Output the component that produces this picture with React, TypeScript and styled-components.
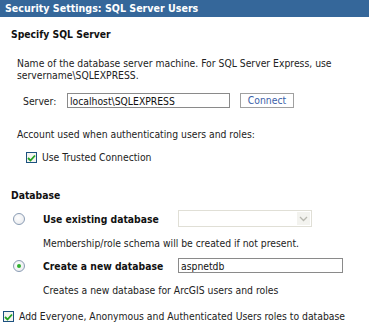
import React from 'react';
import styled, { createGlobalStyle } from 'styled-components';

const Global = createGlobalStyle`
  html, body { margin: 0; padding: 0; background: #fff; }
  body {
    font-family: "DejaVu Sans Condensed", "DejaVu Sans", Verdana, sans-serif;
    font-size: 10.3px;
    color: #222;
  }
`;

const App: React.FC = () => {
  return (
    <Wrapper>
      <Global />
      <Header>Security Settings: SQL Server Users</Header>
      <Section top={11}>
        <Title gap={16}>Specify SQL Server</Title>
        <Indent>
          <Text>
            Name of the database server machine. For SQL Server Express, use
            <br />
            servername\SQLEXPRESS.
          </Text>
          <ServerRow>
            <Label>Server:</Label>
            <TextBox width={163} defaultValue="localhost\SQLEXPRESS" />
            <Button>Connect</Button>
          </ServerRow>
          <Text>Account used when authenticating users and roles:</Text>
          <CheckRow indent={9} top={11}>
            <Check />
            <span>Use Trusted Connection</span>
          </CheckRow>
        </Indent>
      </Section>
      <Section top={25}>
        <Title gap={1}>Database</Title>
        <OptionRow>
          <Radio />
          <OptionLabel>Use existing database</OptionLabel>
          <Select>
            <SelectArrow>
              <svg width="9" height="6" viewBox="0 0 9 6">
                <path d="M1 1 L4.5 4.5 L8 1" fill="none" stroke="#b8b8b0" strokeWidth="1.3" />
              </svg>
            </SelectArrow>
          </Select>
        </OptionRow>
        <Note>Membership/role schema will be created if not present.</Note>
        <OptionRow>
          <Radio checked />
          <OptionLabel>Create a new database</OptionLabel>
          <TextBox width={165} defaultValue="aspnetdb" />
        </OptionRow>
        <Note>Creates a new database for ArcGIS users and roles</Note>
      </Section>
      <CheckRow indent={3} top={14}>
        <Check />
        <span>Add Everyone, Anonymous and Authenticated Users roles to database</span>
      </CheckRow>
    </Wrapper>
  );
};

const CheckMark: React.FC = () => (
  <svg width="9" height="8" viewBox="0 0 9 8">
    <path d="M1 4 L3.5 6.5 L8 1.5" fill="none" stroke="#21a121" strokeWidth="1.8" />
  </svg>
);

const Check: React.FC = () => (
  <CheckBox>
    <CheckMark />
  </CheckBox>
);

const Radio: React.FC<{ checked?: boolean }> = ({ checked }) => (
  <RadioCircle>{checked && <RadioDot />}</RadioCircle>
);

export default App;

const Wrapper = styled.div`
  width: 369px;
  height: 332px;
  overflow: hidden;
  white-space: nowrap;
`;

const Header = styled.div`
  height: 17px;
  line-height: 17px;
  background: #35679a;
  color: #fff;
  font-weight: bold;
  font-size: 10.6px;
  padding-left: 5px;
`;

const Section = styled.div<{ top: number }>`
  padding: ${(p) => p.top}px 0 0 11px;
`;

const Title = styled.div<{ gap: number }>`
  font-weight: bold;
  color: #111;
  line-height: 13px;
  margin-bottom: ${(p) => p.gap}px;
`;

const Indent = styled.div`
  padding-left: 6px;
`;

const Text = styled.div`
  line-height: 12px;
`;

const ServerRow = styled.div`
  display: flex;
  align-items: center;
  padding: 12px 0 20px 6px;
`;

const Label = styled.span`
  width: 44px;
`;

const TextBox = styled.input<{ width: number }>`
  width: ${(p) => p.width}px;
  height: 15px;
  box-sizing: border-box;
  border: 1px solid #8a8a8a;
  padding: 0 2px;
  font: 10.3px "DejaVu Sans Condensed", "DejaVu Sans", sans-serif;
  color: #111;
  outline: none;
`;

const Button = styled.div`
  margin-left: 10px;
  width: 54px;
  height: 15px;
  box-sizing: border-box;
  border: 1px solid #a0a0a0;
  color: #3b5ea8;
  text-align: center;
  line-height: 13px;
`;

const CheckRow = styled.div<{ indent: number; top: number }>`
  display: flex;
  align-items: center;
  gap: 5px;
  padding-left: ${(p) => p.indent}px;
  margin-top: ${(p) => p.top}px;
  line-height: 13px;
`;

const CheckBox = styled.span`
  width: 11px;
  height: 11px;
  box-sizing: border-box;
  border: 1px solid #1c5180;
  background: #f4f4f0;
  display: flex;
  align-items: center;
  justify-content: center;
`;

const OptionRow = styled.div`
  display: flex;
  align-items: center;
  height: 17px;
  padding-left: 2px;
  margin-top: 8px;
`;

const RadioCircle = styled.span`
  width: 12px;
  height: 12px;
  box-sizing: border-box;
  border: 1px solid #8a9cb4;
  border-radius: 50%;
  background: radial-gradient(circle at 40% 40%, #ffffff, #e4e6ea);
  display: flex;
  align-items: center;
  justify-content: center;
`;

const RadioDot = styled.span`
  width: 4px;
  height: 4px;
  border-radius: 50%;
  background: #2fb02f;
`;

const OptionLabel = styled.span`
  font-weight: bold;
  color: #111;
  margin-left: 18px;
  width: 135px;
`;

const Select = styled.div`
  width: 134px;
  height: 17px;
  box-sizing: border-box;
  border: 1px solid #e0dfd6;
  display: flex;
  justify-content: flex-end;
  padding: 1px;
`;

const SelectArrow = styled.span`
  width: 13px;
  background: #f3f3ef;
  display: flex;
  align-items: center;
  justify-content: center;
`;

const Note = styled.div`
  padding-left: 32px;
  margin-top: 10px;
  line-height: 12px;
`;
